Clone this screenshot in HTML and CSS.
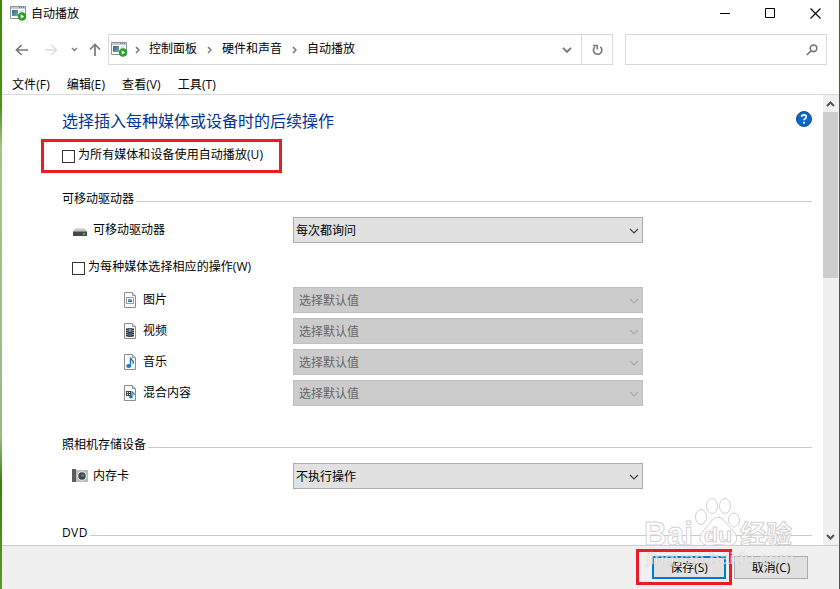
FILE: index.html
```html
<!DOCTYPE html>
<html lang="zh-CN">
<head>
    <meta charset="UTF-8">
    <meta name="viewport" content="width=device-width, initial-scale=1.0">
    <title>自动播放</title>
    <link rel="stylesheet" href="styles.css">
</head>
<body>

<svg class="defs" width="0" height="0">
    <linearGradient id="blue" x1="0" y1="0" x2="1" y2="1"><stop offset="0" stop-color="#2c608d"/><stop offset="1" stop-color="#7cb0a0"/></linearGradient>
    <linearGradient id="lid" x1="0" y1="0" x2="0" y2="1"><stop offset="0" stop-color="#e6e6e6"/><stop offset="1" stop-color="#a8a8a8"/></linearGradient>
    <symbol id="autoplay" viewBox="0 0 17 15">
        <path d="M.5.5h15v12H.5z" fill="#fff" stroke="#8b9298"/>
        <path d="M1 1h14v2H1z" fill="#c3c9cd"/>
        <path d="M9 1.500h1m1 0h1m1 0h1" stroke="#778"/>
        <path d="M2 4h6v6H2z" fill="url(#blue)"/>
        <path d="M9.500 5h4M9.500 7h4" stroke="#b9c3ca"/>
        <circle cx="12" cy="10.500" r="4.200" fill="#22a122"/>
        <path d="M10.700 8.200v4.600l3.500-2.300z" fill="#fff"/>
    </symbol>
    <symbol id="page" viewBox="0 0 12 16">
        <path d="M.5.5h8l3 3v12H.5z" fill="#fafafa" stroke="#8c8c8c"/>
        <path d="M8.500.5v3h3" fill="#ddd" stroke="#999"/>
    </symbol>
    <symbol id="crumb" viewBox="0 0 5 8"><path d="M1 1l3 3-3 3" fill="none" stroke="#777" stroke-width="1.500"/></symbol>
    <symbol id="down" viewBox="0 0 10 6"><path d="M1 1l4 4 4-4" fill="none" stroke="currentColor" stroke-width="1.200"/></symbol>
</svg>

<div class="window">
    <div class="titlebar">
        <svg class="app-icon" width="17" height="15"><use href="#autoplay"/></svg>
        <span class="title">自动播放</span>
        <div class="window-buttons">
            <svg width="10" height="11"><path d="M0 5.500h10" stroke="#000"/></svg>
            <svg width="10" height="11"><path d="M.5.5h9v9h-9z" fill="none" stroke="#000"/></svg>
            <svg width="11" height="11"><path d="M.5.5l10 10M10.500.5l-10 10" stroke="#000" stroke-width="1.100"/></svg>
        </div>
    </div>

    <div class="navbar">
        <svg class="back" width="13" height="12"><path d="M13 6H1.500M6.500 1L1.500 6l5 5" fill="none" stroke="#777" stroke-width="1.700"/></svg>
        <svg class="forward" width="13" height="12"><path d="M0 6h11.500M6.500 1l5 5-5 5" fill="none" stroke="#ddd" stroke-width="1.500"/></svg>
        <svg class="recent" width="7" height="5"><path d="M1 1l2.500 2.500L6 1" fill="none" stroke="#888" stroke-width="1.600"/></svg>
        <svg class="up" width="12" height="13"><path d="M6 13V1.500M1 6.500l5-5 5 5" fill="none" stroke="#777" stroke-width="1.700"/></svg>
        <div class="address">
            <svg class="path-icon" width="17" height="15"><use href="#autoplay"/></svg>
            <svg class="crumb" width="5" height="8"><use href="#crumb"/></svg>
            <span>控制面板</span>
            <svg class="crumb" width="5" height="8"><use href="#crumb"/></svg>
            <span>硬件和声音</span>
            <svg class="crumb" width="5" height="8"><use href="#crumb"/></svg>
            <span>自动播放</span>
            <svg class="address-down" width="10" height="6"><path d="M1 .8l4 4 4-4" fill="none" stroke="#777" stroke-width="1.900"/></svg>
        </div>
        <div class="refresh">
            <svg width="11" height="12"><path d="M8.300 2.800A4.200 4.200 0 1 1 3 2.800" fill="none" stroke="#777" stroke-width="1.600"/><path d="M1 1.500h4.200v4" fill="none" stroke="#777" stroke-width="1.500"/></svg>
        </div>
        <div class="search">
            <svg width="12" height="12"><circle cx="7.500" cy="4.300" r="3.300" fill="none" stroke="#777" stroke-width="1.600"/><path d="M5 6.800L.8 11" stroke="#777" stroke-width="1.700"/></svg>
        </div>
    </div>

    <div class="menubar">
        <span>文件(F)</span>
        <span>编辑(E)</span>
        <span>查看(V)</span>
        <span>工具(T)</span>
    </div>

    <div class="main">
        <div class="content">
            <div class="heading">
                <h1>选择插入每种媒体或设备时的后续操作</h1>
                <svg class="help" width="16" height="16"><circle cx="8" cy="8" r="7.500" fill="#0868c8" stroke="#154f91"/><path d="M5.700 6Q5.700 3.900 8 3.900t2.300 1.900Q10.300 7 9 7.700 8 8.200 8 9.300M8 10.700v2" fill="none" stroke="#fff" stroke-width="1.700"/></svg>
            </div>
            <div class="check highlight"><i class="box"></i><span>为所有媒体和设备使用自动播放(U)</span></div>

            <div class="legend drive">可移动驱动器</div>
            <div class="row">
                <svg class="device-icon" width="16" height="16">
                    <path d="M3.500 6h9l2.500 4H1z" fill="url(#lid)"/>
                    <path d="M1 9.500h14V14H1z" fill="#474747"/>
                    <path d="M1 9.500h14" stroke="#8d8d8d"/>
                    <path d="M11 12h2" stroke="#43e043" stroke-width="1.500"/>
                </svg>
                <span class="label">可移动驱动器</span>
                <div class="select"><span>每次都询问</span><svg width="10" height="6"><use href="#down"/></svg></div>
            </div>
            <div class="check per-media"><i class="box"></i><span>为每种媒体选择相应的操作(W)</span></div>

            <div class="media-list">
                <div class="row media">
                    <svg class="media-icon" width="12" height="16"><use href="#page"/><path d="M2.500 5.500h7v6h-7z" fill="#fff" stroke="#999"/><path d="M4 7h4v3H4z" fill="#67aeda"/><path d="M4 9.500l2-1 2 .5v1H4z" fill="#245f89"/></svg>
                    <span class="label">图片</span>
                    <div class="select disabled"><span>选择默认值</span><svg width="10" height="6"><use href="#down"/></svg></div>
                </div>
                <div class="row media">
                    <svg class="media-icon" width="12" height="16"><use href="#page"/><path d="M2 5h8v9H2z" fill="#333"/><path d="M4.500 5.500h3v3.500h-3z" fill="#649ac3"/><path d="M4.500 10h3v3.500h-3z" fill="#406f91"/><path d="M3 5v9M9 5v9" stroke="#eee" stroke-dasharray="1 1"/></svg>
                    <span class="label">视频</span>
                    <div class="select disabled"><span>选择默认值</span><svg width="10" height="6"><use href="#down"/></svg></div>
                </div>
                <div class="row media">
                    <svg class="media-icon" width="12" height="16"><use href="#page"/><path d="M6.500 12V3.500q.5 2 2 3t.5 3.200" fill="none" stroke="#1c79bd" stroke-width="1.400"/><ellipse cx="4.700" cy="12" rx="2.500" ry="1.900" fill="#1c79bd"/></svg>
                    <span class="label">音乐</span>
                    <div class="select disabled"><span>选择默认值</span><svg width="10" height="6"><use href="#down"/></svg></div>
                </div>
                <div class="row media">
                    <svg class="media-icon" width="12" height="16"><use href="#page"/><path d="M2 6h5v5H2z" fill="#444"/><path d="M3 7h1v1H3zM5 7h1v1H5zM3 9h1v1H3zM5 9h1v1H5z" fill="#fff"/><path d="M8 12V6q.3 1.500 1.500 2.200t.3 2" fill="none" stroke="#1c79bd" stroke-width="1.200"/><ellipse cx="6.800" cy="12" rx="1.800" ry="1.400" fill="#1c79bd"/></svg>
                    <span class="label">混合内容</span>
                    <div class="select disabled"><span>选择默认值</span><svg width="10" height="6"><use href="#down"/></svg></div>
                </div>
            </div>

            <div class="legend camera">照相机存储设备</div>
            <div class="row">
                <svg class="device-icon" width="16" height="16">
                    <path d="M4 2h12v12H4z" fill="#bcbcbc"/>
                    <path d="M0 1h4v13H0z" fill="#5c5c5c"/>
                    <circle cx="10" cy="8" r="4.800" fill="#ececec"/>
                    <circle cx="10" cy="8" r="3.700" fill="#3c4548"/>
                    <circle cx="10.500" cy="7.500" r="1.700" fill="#3c8790"/>
                </svg>
                <span class="label">内存卡</span>
                <div class="select"><span>不执行操作</span><svg width="10" height="6"><use href="#down"/></svg></div>
            </div>

            <div class="legend dvd">DVD</div>
        </div>
        <div class="scrollbar">
            <svg class="scroll-arrow" width="15" height="17"><path d="M4 11l3.500-3.500L11 11" fill="none" stroke="#555" stroke-width="2"/></svg>
            <div class="thumb"></div>
            <svg class="scroll-arrow" width="15" height="17"><path d="M4 7l3.500 3.500L11 7" fill="none" stroke="#555" stroke-width="2"/></svg>
        </div>
    </div>

    <div class="footer">
        <div class="save-frame"><button class="button save">保存(S)</button></div>
        <button class="button">取消(C)</button>
    </div>
</div>

<svg class="watermark" width="160" height="80">
    <g class="wm-logo">
        <ellipse cx="60" cy="22" rx="5.500" ry="7.500"/>
        <ellipse cx="71" cy="11" rx="5.500" ry="7.500"/>
        <ellipse cx="84" cy="11" rx="5.500" ry="7.500"/>
        <ellipse cx="93" cy="25" rx="5.500" ry="7"/>
        <path d="M77 22q5 0 8 6l8 9q5 6 1 11-4 4-11 2-6-1-11 0-8 2-12-3-3-6 3-12l6-7q3-6 8-6z"/>
        <text class="wm-brand" x="3" y="50" textLength="49" lengthAdjust="spacingAndGlyphs">Bai</text>
        <text class="wm-du" x="63" y="47" textLength="28" lengthAdjust="spacingAndGlyphs">du</text>
        <text class="wm-cn" x="99" y="48" textLength="52" lengthAdjust="spacingAndGlyphs">经验</text>
    </g>
    <text class="wm-url" x="5" y="69" textLength="148" lengthAdjust="spacingAndGlyphs">jingyan.baidu.com</text>
</svg>

</body>
</html>
```
FILE: styles.css
```css
body {
    display: flex;
    box-sizing: border-box;
    width: 840px;
    height: 589px;
    margin: 0;
    padding: 0 1px 0 2px;
    overflow: hidden;
    background: linear-gradient(#3f8a0a, #4c9210 18%, #a3c58c 25%, #9abb88 74%, #3c8209 82%, #5b9a25);
    font-family: "Open Sans", "Noto Sans CJK SC", sans-serif;
    font-size: 12px;
    line-height: 18px;
    color: #000;
}
.defs {
    position: absolute;
}
.window {
    display: flex;
    flex-direction: column;
    flex: 1;
    background-color: #fff;
    box-shadow: 1px 0 #46603f;
}
svg {
    flex: none;
}
.titlebar {
    display: flex;
    align-items: center;
    height: 27px;
    padding-left: 8px;
}
.title {
    margin-left: 4px;
}
.window-buttons {
    display: flex;
    gap: 35px;
    margin-left: auto;
    margin-right: 18px;
}
.navbar {
    display: flex;
    align-items: center;
    height: 31px;
    margin-top: 7px;
    padding-left: 13px;
}
.forward {
    margin-left: 17px;
}
.recent {
    margin-left: 13px;
}
.up {
    margin-left: 11px;
    margin-right: 1px;
}
.address,
.refresh,
.search {
    display: flex;
    align-items: center;
    box-sizing: border-box;
    height: 31px;
    border: 1px solid #d9d9d9;
}
.address {
    width: 474px;
    margin-left: 6px;
    padding: 0 9px 0 2px;
}
.address .crumb {
    margin: 1px 10px 0;
}
.address .path-icon + .crumb {
    margin-left: 7px;
    margin-right: 9px;
}
.address span {
    margin-top: -1px;
}
.address-down {
    margin-left: auto;
    margin-top: 1px;
}
.refresh {
    justify-content: center;
    width: 32px;
    margin-left: -1px;
}
.search {
    justify-content: flex-end;
    width: 202px;
    margin-left: 12px;
    padding-right: 8px;
}
.menubar {
    display: flex;
    gap: 17px;
    height: 18px;
    padding: 11px 0 0 10px;
    border-bottom: 1px solid #d9d9d9;
    line-height: 17px;
    letter-spacing: .1px;
}
.main {
    display: flex;
    height: 450px;
}
.content {
    flex: 1;
    padding: 15px 11px 0 60px;
}
.heading {
    display: flex;
    align-items: center;
    justify-content: space-between;
    height: 24px;
}
h1 {
    margin: -2px 0 0;
    font-size: 16px;
    font-weight: normal;
    color: #003399;
}
.help {
    margin-top: -6px;
}
.check {
    display: flex;
    align-items: center;
}
.check span {
    margin: -2px 0 0 3px;
    letter-spacing: .07px;
}
.box {
    box-sizing: border-box;
    width: 13px;
    height: 13px;
    border: 1px solid #333;
    background-color: #fff;
}
.highlight {
    box-sizing: border-box;
    width: 241px;
    height: 34px;
    margin: 5px 0 0 -21px;
    padding-left: 18px;
    border: 3px solid #ed1c24;
}
.per-media {
    height: 20px;
    margin: 15px 0 9px 10px;
}
.legend {
    display: flex;
    align-items: center;
    height: 19px;
    margin-bottom: 9px;
}
.legend::after {
    content: "";
    flex: 1;
    height: 1px;
    margin: 6px 0 0 2px;
    background-color: #cacaca;
}
.drive {
    margin-top: 16px;
}
.camera {
    margin-top: 29px;
}
.dvd {
    margin-top: 34px;
    letter-spacing: .4px;
}
.row {
    display: flex;
    align-items: center;
    height: 26px;
}
.device-icon {
    margin: 0 5px 0 10px;
}
.media-icon {
    margin: 0 7px 0 62px;
}
.label {
    width: 200px;
}
.media .label {
    width: 150px;
}
.select {
    display: flex;
    align-items: center;
    justify-content: space-between;
    box-sizing: border-box;
    width: 350px;
    height: 26px;
    padding: 0 3px 0 2px;
    border: 1px solid #adadad;
    background-color: #e1e1e1;
}
.select span {
    margin-top: 2px;
}
.select svg {
    margin-top: 1px;
    color: #444;
}
.select.disabled {
    padding-left: 5px;
    border-color: #bfbfbf;
    background-color: #ccc;
    color: #666;
}
.disabled svg {
    color: #aaa;
}
.media-list {
    display: flex;
    flex-direction: column;
    gap: 5px;
}
.scrollbar {
    display: flex;
    flex-direction: column;
    width: 16px;
    background-color: #f0f0f0;
}
.thumb {
    width: 15px;
    height: 166px;
    margin-bottom: auto;
    background-color: #cdcdcd;
}
.footer {
    display: flex;
    justify-content: flex-end;
    height: 43px;
    padding-right: 31px;
    border-top: 1px solid #ccc;
    background-color: #f0f0f0;
}
.save-frame {
    box-sizing: border-box;
    width: 96px;
    height: 36px;
    margin: 3px 2px 0 0;
    padding: 4px 0 0 13px;
    border: 3px solid #ed1c24;
}
.button {
    box-sizing: border-box;
    width: 74px;
    height: 23px;
    margin-top: 10px;
    padding: 0;
    border: 1px solid #adadad;
    background-color: #e1e1e1;
    font: inherit;
}
.save {
    display: block;
    margin: 0;
    border: 2px solid #0078d7;
}
/* sits over the content and the footer */
.watermark {
    position: absolute;
    left: 641px;
    top: 495px;
    pointer-events: none;
}
.wm-logo {
    fill: #fff;
    fill-opacity: .75;
    stroke: #d2d2d2;
}
.wm-brand {
    font: bold 34px "Liberation Sans", sans-serif;
}
.wm-du {
    font: bold 21px "Liberation Sans", sans-serif;
}
.wm-cn {
    font: bold 25px "Noto Sans CJK SC", sans-serif;
}
.wm-url {
    fill: #fff;
    fill-opacity: .65;
    stroke: #c4c4c4;
    stroke-opacity: .6;
    stroke-width: .6px;
    font: 17px "Liberation Sans", sans-serif;
}
```
